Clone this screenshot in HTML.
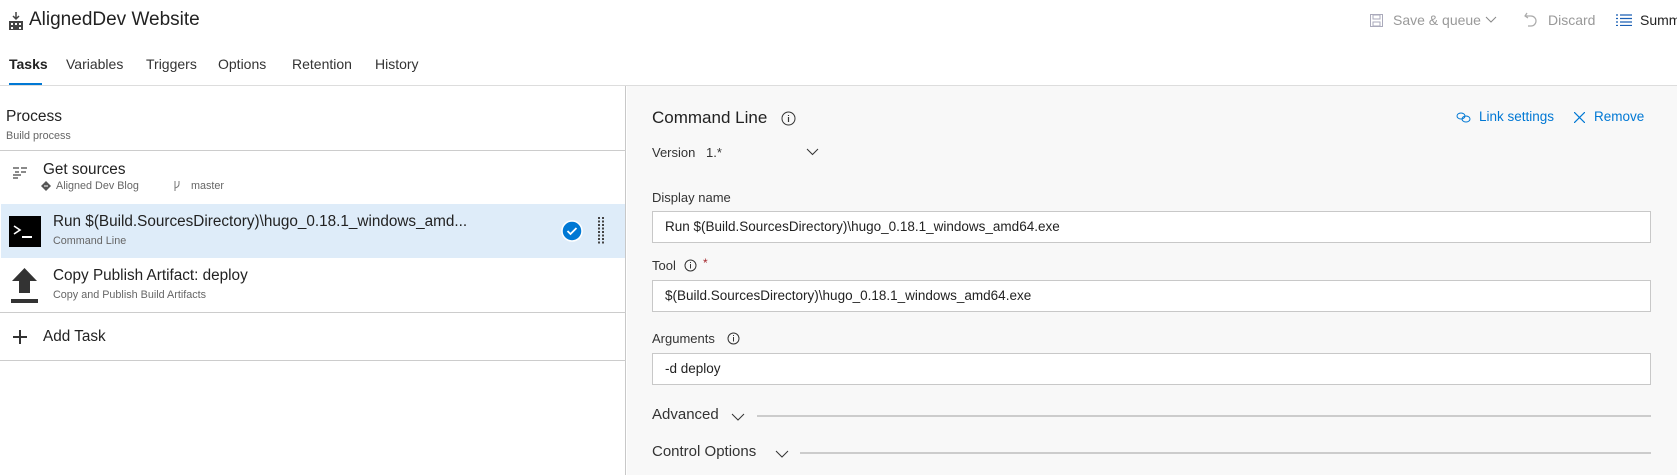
<!DOCTYPE html>
<html><head><meta charset="utf-8"><style>
*{margin:0;padding:0;box-sizing:border-box}
body{width:1677px;height:475px;overflow:hidden;background:#fff;font-family:"Liberation Sans",Arial,sans-serif;color:#333;position:relative}
.a{position:absolute;white-space:nowrap}
.tab{position:absolute;top:56px;font-size:14px;color:#333}
.lbl{font-size:13px;color:#333}
.inp{position:absolute;left:652px;width:999px;background:#fff;border:1px solid #c8c8c8;font-size:13.5px;padding-left:12px;line-height:29px;color:#222}
.sub{font-size:10.8px;color:#666}
.t{font-size:15.3px;color:#222}
</style></head><body>
<svg class="a" style="left:9px;top:12px" width="14" height="18" viewBox="0 0 14 18"><rect x="0" y="9" width="14" height="9" fill="#444"/><rect x="2" y="11" width="2" height="2" fill="#fff"/><rect x="6" y="11" width="2" height="2" fill="#fff"/><rect x="10" y="11" width="2" height="2" fill="#fff"/><rect x="2" y="15" width="2" height="2" fill="#fff"/><rect x="10" y="15" width="2" height="2" fill="#fff"/><path d="M7 0v7M4 4l3 3 3-3" stroke="#444" stroke-width="1.5" fill="none"/></svg>
<div class="a" style="left:29px;top:9px;font-size:19px;color:#222">AlignedDev Website</div>
<svg class="a" style="left:1370px;top:14px" width="13" height="13"><rect x="0.5" y="0.5" width="12" height="12" fill="none" stroke="#aab"/><rect x="3" y="1" width="7" height="4" fill="none" stroke="#aab"/><rect x="3" y="8" width="7" height="4" fill="none" stroke="#aab"/></svg>
<div class="a" style="left:1393px;top:12px;font-size:14px;color:#999">Save &amp; queue</div>
<svg class="a" style="left:1485px;top:16px" width="12" height="8"><path d="M1 1l5 5 5-5" stroke="#888" fill="none"/></svg>
<svg class="a" style="left:1524px;top:12px" width="14" height="16"><path d="M3 1L1 4l3 2M1 4h6a5 5 0 0 1 0 10H4" stroke="#aaa" fill="none" stroke-width="1.2"/></svg>
<div class="a" style="left:1548px;top:12px;font-size:14px;color:#999">Discard</div>
<svg class="a" style="left:1616px;top:14px" width="16" height="12"><path d="M0 1h2M4 1h12M0 4.5h2M4 4.5h12M0 8h2M4 8h12M0 11.5h2M4 11.5h12" stroke="#1a5fb4" stroke-width="1.3"/></svg>
<div class="a" style="left:1640px;top:12px;font-size:14px;color:#222">Summary</div>
<div class="tab" style="left:9px;font-weight:bold;color:#222">Tasks</div>
<div class="tab" style="left:66px">Variables</div>
<div class="tab" style="left:146px">Triggers</div>
<div class="tab" style="left:218px">Options</div>
<div class="tab" style="left:292px">Retention</div>
<div class="tab" style="left:375px">History</div>
<div class="a" style="left:9px;top:83px;width:33px;height:2px;background:#0078d4"></div>
<div class="a" style="left:0;top:85px;width:1677px;height:1px;background:#ddd"></div>
<div class="a" style="left:0;top:86px;width:626px;height:389px;background:#fff;border-right:1px solid #c8c8c8"></div>
<div class="a" style="left:6px;top:108px;font-size:15.5px;color:#222">Process</div>
<div class="a sub" style="left:6px;top:130px">Build process</div>
<div class="a" style="left:0;top:150px;width:626px;height:1px;background:#ccc"></div>
<svg class="a" style="left:13px;top:167px" width="14" height="12"><path d="M0 1h6M8 1h6M2 5h4M8 5h5M0 8h8M0 11h5" stroke="#444" stroke-width="1.2"/></svg>
<div class="a t" style="left:43px;top:161px">Get sources</div>
<svg class="a" style="left:41px;top:181px" width="10" height="10"><path d="M5 0l5 5-5 5-5-5z" fill="#555"/><path d="M3 5h4" stroke="#fff"/></svg>
<div class="a sub" style="left:56px;top:180px">Aligned Dev Blog</div>
<svg class="a" style="left:173px;top:181px" width="8" height="10"><path d="M2 0v10M6 0v3q0 3-4 4" stroke="#777" fill="none"/></svg>
<div class="a sub" style="left:191px;top:180px">master</div>
<div class="a" style="left:1px;top:204px;width:624px;height:54px;background:#deecf9"></div>
<div class="a" style="left:9px;top:216px;width:32px;height:31px;background:#000"></div>
<svg class="a" style="left:9px;top:216px" width="32" height="31"><path d="M5 10l6 4-6 4" stroke="#fff" stroke-width="1.6" fill="none"/><path d="M13 21h10" stroke="#fff" stroke-width="2"/></svg>
<div class="a t" style="left:53px;top:213px">Run $(Build.SourcesDirectory)\hugo_0.18.1_windows_amd...</div>
<div class="a sub" style="left:53px;top:235px">Command Line</div>
<svg class="a" style="left:561px;top:220px" width="22" height="22"><circle cx="11" cy="11" r="10" fill="#0078d4" stroke="#fff" stroke-width="1.5"/><path d="M6.5 11l3 3 6-6" stroke="#fff" stroke-width="1.8" fill="none"/></svg>
<svg class="a" style="left:598px;top:217px" width="8" height="28"><path d="M1 0v28M5 0v28" stroke="#444" stroke-width="2" stroke-dasharray="2 1.5"/></svg>
<svg class="a" style="left:11px;top:268px" width="27" height="37"><path d="M13.5 0L26 13h-7v12H8V13H1z" fill="#333"/><rect x="0" y="31" width="27" height="4" fill="#333"/></svg>
<div class="a t" style="left:53px;top:267px">Copy Publish Artifact: deploy</div>
<div class="a sub" style="left:53px;top:289px">Copy and Publish Build Artifacts</div>
<div class="a" style="left:0;top:312px;width:626px;height:1px;background:#ccc"></div>
<svg class="a" style="left:13px;top:330px" width="14" height="14"><path d="M7 0v14M0 7h14" stroke="#333" stroke-width="2"/></svg>
<div class="a t" style="left:43px;top:328px">Add Task</div>
<div class="a" style="left:0;top:360px;width:626px;height:1px;background:#ccc"></div>
<div class="a" style="left:627px;top:86px;width:1050px;height:389px;background:#f8f8f8"></div>
<div class="a" style="left:652px;top:108px;font-size:17px;color:#222">Command Line</div>
<svg class="a" style="left:781px;top:111px" width="15" height="15"><circle cx="7.5" cy="7.5" r="6.5" fill="none" stroke="#333"/><path d="M7.5 6v5M7.5 4v1" stroke="#333" stroke-width="1.2"/></svg>
<svg class="a" style="left:1456px;top:112px" width="16" height="11"><ellipse cx="5" cy="4" rx="4" ry="3" fill="none" stroke="#0078d4"/><ellipse cx="10" cy="7" rx="4" ry="3" fill="none" stroke="#0078d4"/></svg>
<div class="a" style="left:1479px;top:109px;font-size:13.5px;color:#0078d4">Link settings</div>
<svg class="a" style="left:1574px;top:112px" width="11" height="11"><path d="M0 0l11 11M11 0L0 11" stroke="#0078d4" stroke-width="1.2"/></svg>
<div class="a" style="left:1594px;top:109px;font-size:13.5px;color:#0078d4">Remove</div>
<div class="a lbl" style="left:652px;top:145px">Version</div>
<div class="a lbl" style="left:706px;top:145px">1.*</div>
<svg class="a" style="left:806px;top:148px" width="13" height="8"><path d="M1 1l5.5 5.5L12 1" stroke="#333" fill="none"/></svg>
<div class="a lbl" style="left:652px;top:190px">Display name</div>
<div class="inp" style="top:211px;height:32px">Run $(Build.SourcesDirectory)\hugo_0.18.1_windows_amd64.exe</div>
<div class="a lbl" style="left:652px;top:258px">Tool</div>
<svg class="a" style="left:684px;top:259px" width="13" height="13"><circle cx="6.5" cy="6.5" r="5.5" fill="none" stroke="#333"/><path d="M6.5 5v4.5M6.5 3v1" stroke="#333"/></svg>
<div class="a" style="left:703px;top:256px;font-size:12px;color:#a4262c">*</div>
<div class="inp" style="top:280px;height:32px">$(Build.SourcesDirectory)\hugo_0.18.1_windows_amd64.exe</div>
<div class="a lbl" style="left:652px;top:331px">Arguments</div>
<svg class="a" style="left:727px;top:332px" width="13" height="13"><circle cx="6.5" cy="6.5" r="5.5" fill="none" stroke="#333"/><path d="M6.5 5v4.5M6.5 3v1" stroke="#333"/></svg>
<div class="inp" style="top:353px;height:32px">-d deploy</div>
<div class="a" style="left:652px;top:406px;font-size:15px;color:#333">Advanced</div>
<svg class="a" style="left:731px;top:413px" width="14" height="8"><path d="M1 1l6 6 6-6" stroke="#333" fill="none"/></svg>
<div class="a" style="left:757px;top:415px;width:894px;height:2px;background:#ccc"></div>
<div class="a" style="left:652px;top:443px;font-size:15px;color:#333">Control Options</div>
<svg class="a" style="left:775px;top:450px" width="14" height="8"><path d="M1 1l6 6 6-6" stroke="#333" fill="none"/></svg>
<div class="a" style="left:800px;top:452px;width:851px;height:2px;background:#ccc"></div>
</body></html>
